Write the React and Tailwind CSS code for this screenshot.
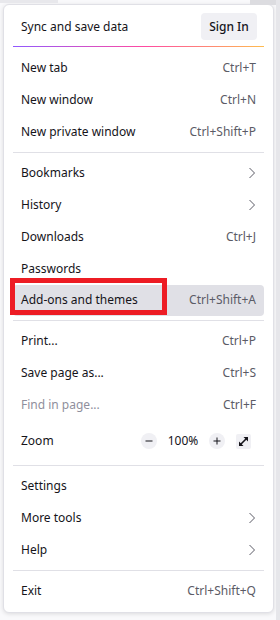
import React from "react";

function Chevron() {
  return (
    <svg width="8" height="12" viewBox="0 0 8 12" className="text-[#5b5b66]">
      <path d="M1.5 1 L6.5 6 L1.5 11" fill="none" stroke="currentColor" strokeWidth="1" />
    </svg>
  );
}

function Row({ label, shortcut, chevron, disabled, highlight, children }) {
  return (
    <div
      className={
        "relative flex h-[32px] items-center justify-between rounded-[4px] px-[8px] " +
        (highlight ? "bg-[#e0e0e6]" : "")
      }
    >
      <span className={disabled ? "text-[#8f8f9d]" : "text-[#15141a]"}>{label}</span>
      {shortcut && <span className="text-[#5b5b66]">{shortcut}</span>}
      {chevron && <Chevron />}
      {children}
    </div>
  );
}

function Sep() {
  return <div className="my-[4px] h-px bg-[#e0e0e6]" />;
}

export default function App() {
  return (
    <div
      className="relative h-[620px] w-[280px] overflow-hidden bg-[#f9f9fb] text-[12px]"
      style={{ fontFamily: '"Noto Sans", "Open Sans", sans-serif' }}
    >
      <div className="absolute left-0 top-0 h-[3px] w-[58px] bg-[#e8e8ec]" />
      <div className="absolute right-0 top-0 h-[5px] w-[30px] bg-[#dcdce0]" />
      <div className="absolute right-0 top-0 h-[620px] w-[4px] bg-[#e6e6ea]" />
      <div className="ml-[3px] mt-[4px] flex h-[609px] w-[271px] flex-col rounded-[6px] border border-[#e0e0e6] bg-white px-[9px] pt-[6px] pb-[5px] shadow-[0_1px_4px_rgba(0,0,0,0.12)]">
        <div className="flex h-[32px] items-center justify-between pl-[8px] pr-[7px]">
          <span className="text-[#15141a]">Sync and save data</span>
          <button className="h-[27px] w-[56px] rounded-[4px] bg-[#f0f0f4] text-[12px] font-medium text-[#15141a]">
            Sign In
          </button>
        </div>
        <div className="mt-[3px] mb-[5px] h-px bg-[linear-gradient(90deg,#9059ff_0%,#ff4aa2_52%,#ffbd4f_100%)]" />
        <Row label="New tab" shortcut="Ctrl+T" />
        <Row label="New window" shortcut="Ctrl+N" />
        <Row label="New private window" shortcut="Ctrl+Shift+P" />
        <Sep />
        <Row label="Bookmarks" chevron />
        <Row label="History" chevron />
        <Row label="Downloads" shortcut="Ctrl+J" />
        <Row label="Passwords" />
        <Row label="Add-ons and themes" shortcut="Ctrl+Shift+A" highlight>
          <div className="pointer-events-none absolute left-[-3px] top-[-7px] h-[37px] w-[157px] border-[5px] border-[#ed1c24]" />
        </Row>
        <Sep />
        <Row label="Print..." shortcut="Ctrl+P" />
        <Row label="Save page as..." shortcut="Ctrl+S" />
        <Row label="Find in page..." shortcut="Ctrl+F" disabled />
        <div className="flex h-[40px] items-center justify-between pl-[8px] pr-[13px]">
          <span className="text-[#15141a]">Zoom</span>
          <div className="flex items-center">
            <div className="flex h-[16px] w-[16px] items-center justify-center rounded-full bg-[#f0f0f4]">
              <svg width="8" height="8" viewBox="0 0 8 8">
                <path d="M0.5 4 H7.5" stroke="#15141a" strokeWidth="1" />
              </svg>
            </div>
            <span className="w-[52px] text-center text-[#15141a]">100%</span>
            <div className="flex h-[16px] w-[16px] items-center justify-center rounded-full bg-[#f0f0f4]">
              <svg width="8" height="8" viewBox="0 0 8 8">
                <path d="M0.5 4 H7.5 M4 0.5 V7.5" stroke="#15141a" strokeWidth="1" />
              </svg>
            </div>
            <div className="ml-[11px] flex h-[15px] w-[15px] items-center justify-center rounded-[2px] bg-[#f0f0f4]">
              <svg width="11" height="11" viewBox="0 0 11 11">
                <path d="M2 9 L9 2" stroke="#15141a" strokeWidth="1.6" />
                <path d="M5.5 1 H10 V5.5 Z" fill="#15141a" />
                <path d="M1 5.5 V10 H5.5 Z" fill="#15141a" />
              </svg>
            </div>
          </div>
        </div>
        <Sep />
        <Row label="Settings" />
        <Row label="More tools" chevron />
        <Row label="Help" chevron />
        <Sep />
        <Row label="Exit" shortcut="Ctrl+Shift+Q" />
      </div>
    </div>
  );
}
